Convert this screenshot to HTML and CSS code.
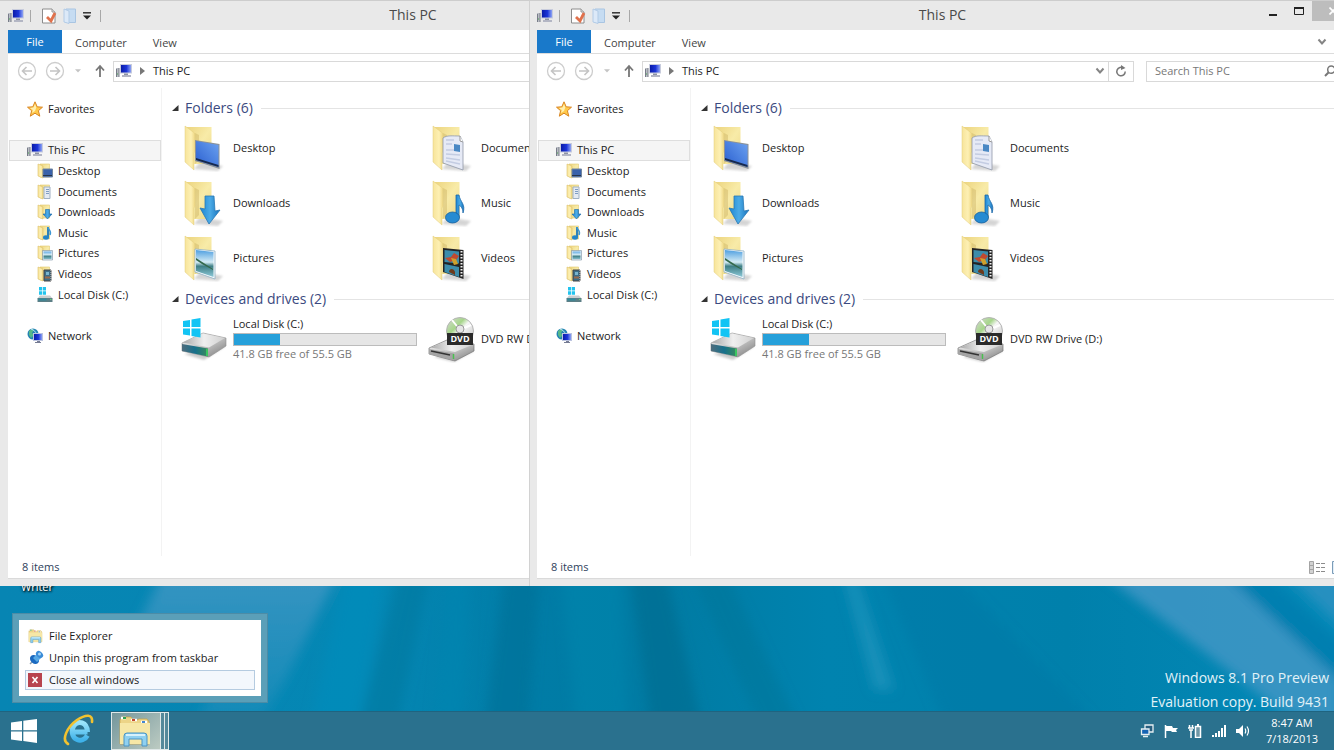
FILE: index.html
```
<!DOCTYPE html>
<html lang="en">
<head>
<meta charset="utf-8">
<title>This PC</title>
<link rel="stylesheet" href="styles.css">
</head>
<body>
<svg class="sprite" width="0" height="0" aria-hidden="true">
  <defs>
    <linearGradient id="gFront" x1="0" x2="1"><stop offset="0" stop-color="#f7e49a"/><stop offset=".6" stop-color="#fdf0b4"/><stop offset="1" stop-color="#efd782"/></linearGradient>
    <linearGradient id="gBack" x1="0" x2="1" y2="1"><stop offset="0" stop-color="#ecd47e"/><stop offset=".5" stop-color="#f8eba8"/><stop offset="1" stop-color="#edd887"/></linearGradient>
    <linearGradient id="gBlue" x1="0" x2="1" y1="1" y2="0"><stop offset="0" stop-color="#2a5fd0"/><stop offset="1" stop-color="#6ca2f0"/></linearGradient>
    <linearGradient id="gArrow" x1="0" x2="1"><stop offset="0" stop-color="#1b86d2"/><stop offset=".5" stop-color="#4cabe6"/><stop offset="1" stop-color="#1672bd"/></linearGradient>
    <linearGradient id="gSky" x2="0" y2="1"><stop offset="0" stop-color="#4f9fe0"/><stop offset=".45" stop-color="#d5ecf5"/><stop offset=".6" stop-color="#3f7f86"/><stop offset="1" stop-color="#8cc8d8"/></linearGradient>
    <linearGradient id="gMetal" x1="0" x2="1" y2="1"><stop offset="0" stop-color="#f4f4f4"/><stop offset=".6" stop-color="#b9b9b9"/><stop offset="1" stop-color="#777"/></linearGradient>
    <linearGradient id="gTop" x1="0" x2="1"><stop offset="0" stop-color="#a8a8a8"/><stop offset=".5" stop-color="#efefef"/><stop offset="1" stop-color="#d0d0d0"/></linearGradient>
    <linearGradient id="gTeal" x1="0" x2="1"><stop offset="0" stop-color="#4f6c7c"/><stop offset=".5" stop-color="#17708c"/><stop offset="1" stop-color="#3a8a5c"/></linearGradient>
    <linearGradient id="gScreen" x1="0" x2="1"><stop offset="0" stop-color="#0a1ba8"/><stop offset=".55" stop-color="#1c35d8"/><stop offset="1" stop-color="#8ea4f4"/></linearGradient>
    <linearGradient id="gIe" x2="0" y2="1"><stop offset="0" stop-color="#9be4fb"/><stop offset="1" stop-color="#3fb2ea"/></linearGradient>
    <linearGradient id="gDisc" x1="0" x2="1" y2="1"><stop offset="0" stop-color="#d9d9d9"/><stop offset=".35" stop-color="#a6d68a"/><stop offset=".5" stop-color="#f6f6f6"/><stop offset="1" stop-color="#bdbdbd"/></linearGradient>
    <filter id="soft"><feGaussianBlur stdDeviation="1.2"/></filter>
  </defs>

  <symbol id="pc" viewBox="0 0 16 16">
    <path d="M0 5h3v9H0z" fill="#b9bcc4"/><path d="M.5 6v8M3 5v9" stroke="#777c88"/><path d="M1 11h1" stroke="#4aa84e"/>
    <path d="M4 1h12v9.500H4z" fill="#c8ccdc"/><path d="M5 2h10v7.500H5z" fill="url(#gScreen)"/>
    <path d="M8 10.500h4v2H8z" fill="#8d92a4"/><path d="M6 12h9v2H6z" fill="#b3b6c4"/>
  </symbol>
  <symbol id="props" viewBox="0 0 16 16">
    <path d="M1.500 1h9.500l3 3v11h-12.500z" fill="#fff" stroke="#8c8c8c"/><path d="M11 1v3h3" fill="#ddd" stroke="#999"/>
    <path d="M6 9l4 4 4-8" fill="none" stroke="#e0714c" stroke-width="2.800"/>
  </symbol>
  <symbol id="newfolder" viewBox="0 0 14 16">
    <path d="M3 1h9.500v13.500H3z" fill="#c6dcf2" stroke="#a9c5e2"/><path d="M1 1l5 2v12.500l-5-1.500z" fill="#dce9f8" stroke="#b2cbe6"/>
  </symbol>
  <symbol id="star" viewBox="0 0 16 16">
    <path d="M8 .8l2.200 5 5.300.4-4.100 3.500 1.400 5.500L8 12.200l-4.700 3 1.300-5.500L.5 6.200l5.300-.4z" fill="#ffc94a" stroke="#d98624"/><path d="M8 3l1.300 3.500L8 10 5 12l.8-3L3 7l3.500-.4z" fill="#fff0b0"/>
  </symbol>
  <symbol id="network" viewBox="0 0 16 16">
    <circle cx="6" cy="6" r="5.500" fill="#2383b4"/><path d="M2 3c2-2 4-2 5-1L5 5l2 2-3 3-2-3z" fill="#56b88a"/><path d="M4 1c3 1 5 3 5 5" stroke="#bfe6f4" fill="none"/>
    <path d="M6 5h10v8H6z" fill="#bcc4e0"/><path d="M7 6h8v6H7z" fill="url(#gScreen)"/><path d="M10 13h3v1h1v1H8v-1h2z" fill="#767c94"/>
  </symbol>
  <symbol id="folderS" viewBox="0 0 16 16">
    <path d="M3 1h9.500v13H3z" fill="url(#gBack)" stroke="#e2c970" stroke-width=".6"/><path d="M1 1l5 2v12l-5-2z" fill="url(#gFront)" stroke="#dcc06a" stroke-width=".6"/>
  </symbol>
  <symbol id="desktopS" viewBox="0 0 16 16"><use href="#folderS"/><path d="M6 6h9.500v8H6z" fill="#3a62aa" stroke="#71859f"/><path d="M6 12.500h9" stroke="#26354a"/></symbol>
  <symbol id="documentsS" viewBox="0 0 16 16"><use href="#folderS"/><path d="M7 3h6v11.500H7z" fill="#e4eaf2" stroke="#9fb0c4"/><path d="M9 5.500h3M9 7.500h3M9 9.500h3" stroke="#7e9dc4"/></symbol>
  <symbol id="downloadsS" viewBox="0 0 16 16"><use href="#folderS"/><path d="M8.500 5.500h4V10H15l-4.500 5L6 10h2.500z" fill="url(#gArrow)" stroke="#1a6aa8" stroke-width=".6"/></symbol>
  <symbol id="musicS" viewBox="0 0 16 16"><use href="#folderS"/><path d="M11 2v10" stroke="#1b77bb" stroke-width="1.800"/><path d="M11 2c0 3 4 3 2 8" fill="none" stroke="#3d97d4" stroke-width="1.500"/><ellipse cx="9" cy="12.500" rx="3" ry="2.200" fill="#2385c8"/></symbol>
  <symbol id="picturesS" viewBox="0 0 16 16"><use href="#folderS"/><path d="M6 6h9v8.500H6z" fill="url(#gSky)" stroke="#e4eef4"/><path d="M5.500 5.500h10v9.500h-10z" fill="none" stroke="#7890a4" stroke-width=".6"/></symbol>
  <symbol id="videosS" viewBox="0 0 16 16"><use href="#folderS"/><path d="M7 4h7v11H7z" fill="#3c6e88" stroke="#444"/><path d="M9 6h3v3H9z" fill="#79b4ce"/><path d="M8 11.500h5" stroke="#9a6a4c" stroke-width="2"/><path d="M14 4v11" stroke="#ddd" stroke-dasharray="1 1"/></symbol>
  <symbol id="diskS" viewBox="0 0 16 16">
    <path d="M2 0l3-.1v3.600H2zM5.700 0L9-.1v3.600H5.700zM2 4.200h3v3.600H2zM5.700 4.200H9v3.600H5.700z" fill="#22c3ee"/>
    <path d="M3 8.500h10l2.500 3H.5z" fill="#c8ced0"/><path d="M.5 11h15v4H.5z" fill="#5d7f86"/><path d="M1.500 12.500h8" stroke="#2f8a9c" stroke-width="2"/><path d="M13 12.500h1.500" stroke="#62d377"/>
  </symbol>

  <symbol id="folderL" viewBox="0 0 44 48">
    <path d="M18 38l23 4-5 5-24-2z" fill="#b9b9b9" opacity=".6" filter="url(#soft)"/>
    <path d="M4 3h25.500v37H12z" fill="url(#gBack)"/>
    <path d="M13 9l4 2v25l-4 4z" fill="#b89a48" opacity=".3"/>
    <path d="M3 2l9.500 7 .5 18-1 2v17L3 38z" fill="url(#gFront)" stroke="#e3cd7c" stroke-width=".5"/>
  </symbol>
  <symbol id="desktopL" viewBox="0 0 44 48"><use href="#folderL"/><path d="M13 16l24.500 4v25L13 37z" fill="#8c9298"/><path d="M14 17l22.500 4v22L14 36z" fill="url(#gBlue)"/><path d="M14 34l22.500 7v2L14 36z" fill="#17294d"/></symbol>
  <symbol id="documentsL" viewBox="0 0 44 48"><use href="#folderL"/><path d="M13 14c4-3 9-2 17-2l3 6v28l-20-7z" fill="#e6eaf6" stroke="#8f98a8" stroke-width=".8"/><path d="M16 16h8M16 20h6M16 26h14M16 30l14 1M16 34l14 2M16 37l14 3" stroke="#c3cce2" stroke-width="1.300"/><path d="M24 20l6 1v7l-6-1z" fill="#4a88c4"/><path d="M30 12v5l3 1" fill="#fff" stroke="#999"/></symbol>
  <symbol id="downloadsL" viewBox="0 0 44 48"><use href="#folderL"/><path d="M23 17h9l1 15 5-1-11 14-9-16 5 1z" fill="url(#gArrow)" stroke="#2a78b4" stroke-width=".8"/></symbol>
  <symbol id="musicL" viewBox="0 0 44 48"><use href="#folderL"/><path d="M26 16h3c1 7 7 9 4 18 0-6-4-8-4-8v13h-3z" fill="url(#gArrow)" stroke="#1a68aa" stroke-width=".8"/><ellipse cx="22.500" cy="38.500" rx="7" ry="5.500" fill="#268bd2" stroke="#17609c" stroke-width=".8"/></symbol>
  <symbol id="picturesL" viewBox="0 0 44 48"><use href="#folderL"/><path d="M13 15l20 2v28l-20-7z" fill="#f6fafc" stroke="#8fb0c4" stroke-width=".8"/><path d="M14 16l17.500 2v25L14 37z" fill="url(#gSky)"/><path d="M14 26l6 4 11 6v-1L14 24z" fill="#34694c"/></symbol>
  <symbol id="videosL" viewBox="0 0 44 48"><use href="#folderL"/><path d="M13 14l20.500 2v29L13 38z" fill="#242424"/><path d="M14.500 16l14.500 1.500v12L14.500 28zM14.500 30l14.500 3v10l-14.500-5z" fill="#3c8cab"/><path d="M15 24l6-1 3-4 5 3-3 4-6 2z" fill="#c14a30"/><path d="M21 24l5 1 2 5-4 1z" fill="#d0a02c"/><path d="M19 38c0-4 5-4 6 0v3z" fill="#6d3a1c"/><path d="M31.500 17v27" stroke="#f4f4f4" stroke-width="2" stroke-dasharray="1.500 1.500"/></symbol>
  <symbol id="diskL" viewBox="0 0 48 44">
    <path d="M4 37l20 6 22-14-8 1z" fill="#999" opacity=".5" filter="url(#soft)"/>
    <path d="M2 26l21-10 23 5v8L29 40 2 34z" fill="url(#gMetal)" stroke="#8e8e8e" stroke-width=".6"/>
    <path d="M3 25.500l20-9 22 4.500-16 9.500z" fill="url(#gTop)"/><path d="M2 27l26 4.500v8L2 34z" fill="url(#gTeal)"/><path d="M27 32v7" stroke="#3ddb60" stroke-width="1.500"/>
    <path d="M3 4l7-1v7H3zM11.500 2.500L20.500 1v9h-9zM3 11.500h7v7l-7-1zM11.500 11.500h9v9l-9-1.500z" fill="#12c4f4"/>
  </symbol>
  <symbol id="dvdL" viewBox="0 0 48 48">
    <path d="M6 42l20 5 20-11-4-5z" fill="#999" opacity=".5" filter="url(#soft)"/>
    <circle cx="32" cy="16" r="13.500" fill="url(#gDisc)" stroke="#b5b5b5"/><path d="M32 15L24 5M32 15l11-5" stroke="#fff" stroke-width="2"/><circle cx="32" cy="14" r="4" fill="#e6e6e6" stroke="#999"/>
    <path d="M1 33l18-8 27 4v7L27 46 1 39z" fill="url(#gMetal)" stroke="#777" stroke-width=".7"/><path d="M3 32.500L19 26l25 4-17 7z" fill="url(#gTop)"/>
    <path d="M1 34l25 4.500v7L1 39z" fill="#a4a4a4"/><path d="M3 36l19 4" stroke="#333" stroke-width="1.300"/><path d="M25.500 39v5" stroke="#49c04f" stroke-width="1.500"/>
    <path d="M19 18h26v12H19z" fill="#2b2b2b"/><text x="32" y="27" class="dvd-text">DVD</text>
  </symbol>

  <symbol id="explorer" viewBox="0 0 36 32">
    <path d="M2 5l2-3h9l2 3h4l2-1h8l2 3v22H2z" fill="#ecd487" stroke="#c7a243" stroke-width=".7"/>
    <path d="M3 3h5M13 5h6M23 7h6" stroke="#fff" stroke-width="2.500"/><path d="M5 3h3" stroke="#32a252" stroke-width="2"/><path d="M14 5h3" stroke="#c5492d" stroke-width="2"/><path d="M24 7h3" stroke="#4587cf" stroke-width="2"/>
    <path d="M2 8h30v21H2z" fill="#f6e7a6"/>
    <path d="M6 31V21q0-3 3-3h17q3 0 3 3v10h-5v-7H11v7z" fill="#8fd0f0" stroke="#4a94c4"/><path d="M8 20h19" stroke="#d6f1fc" stroke-width="2"/>
  </symbol>
  <symbol id="pin" viewBox="0 0 16 16">
    <path d="M2 14l4-4" stroke="#8b9eae" stroke-width="1.500"/><ellipse cx="6.500" cy="9.500" rx="5" ry="4" transform="rotate(45 6.500 9.500)" fill="#1c6ac0"/><path d="M5 8l4-4 4 4-4 4z" fill="#57a9e6"/><ellipse cx="11.500" cy="4.500" rx="4" ry="3" transform="rotate(45 11.500 4.500)" fill="#3a8cd8"/><circle cx="11.500" cy="4" r="1.500" fill="#a5d5f6"/>
  </symbol>
  <symbol id="closeRed" viewBox="0 0 14 14"><path d="M0 0h14v14H0z" fill="#b8434e"/><path d="M4.500 4l5 6M9.500 4l-5 6" stroke="#fff" stroke-width="1.600"/></symbol>
  <symbol id="ie" viewBox="0 0 32 32">
    <path d="M24.500 18H10.500M24.300 21.500C22 26 17.500 27 14 25.500 8.500 23 8 15.500 11 11.500 15 6.500 24 7.500 24.500 18" fill="none" stroke="url(#gIe)" stroke-width="5"/>
    <path d="M5 30C-2 26 4 13 14 6c9-6 16-6 15 2" fill="none" stroke="#f2c230" stroke-width="2.600" stroke-linecap="round"/>
  </symbol>
  <symbol id="start" viewBox="0 0 26 24"><path d="M0 3.500l11-1.600v9.400H0zM12.300 1.700L26 0v11.300H12.300zM0 12.600h11V22L0 20.500zM12.300 12.600H26V24l-13.700-1.900z" fill="#fff"/></symbol>

  <symbol id="back" viewBox="0 0 20 20"><circle cx="10" cy="10" r="8.500" fill="none" stroke="#cdcdcd" stroke-width="1.300"/><path d="M15 10H6M9.500 6L5.500 10l4 4" fill="none" stroke="#c4c4c4" stroke-width="1.600"/></symbol>
  <symbol id="forward" viewBox="0 0 20 20"><circle cx="10" cy="10" r="8.500" fill="none" stroke="#cdcdcd" stroke-width="1.300"/><path d="M5 10h9M10.500 6l4 4-4 4" fill="none" stroke="#c4c4c4" stroke-width="1.600"/></symbol>
  <symbol id="up" viewBox="0 0 10 14"><path d="M5 13V3M1 6.500L5 2l4 4.500" fill="none" stroke="#777" stroke-width="1.800"/></symbol>
  <symbol id="caret" viewBox="0 0 8 5"><path d="M0 0h8L4 4.500z"/></symbol>
  <symbol id="crumb" viewBox="0 0 5 8"><path d="M0 0l5 4-5 4z" fill="#777"/></symbol>
  <symbol id="customize" viewBox="0 0 8 8"><path d="M0 .8h8" stroke="#333" stroke-width="1.500"/><path d="M0 3.500h8L4 7.500z" fill="#222"/></symbol>
  <symbol id="chev" viewBox="0 0 10 8"><path d="M1.500 1.500L5 5.500l3.500-4" fill="none" stroke="currentColor" stroke-width="2"/></symbol>
  <symbol id="refresh" viewBox="0 0 12 12"><path d="M8.500 3.200A4.200 4.200 0 1 0 10.200 6.500" fill="none" stroke="#777" stroke-width="1.500"/><path d="M6 0l4.500 3L6 5z" fill="#777"/></symbol>
  <symbol id="lens" viewBox="0 0 12 12"><circle cx="7.300" cy="4.700" r="3.600" fill="none" stroke="#777" stroke-width="1.500"/><path d="M4.700 7.300L1 11" stroke="#777" stroke-width="2"/></symbol>
  <symbol id="expand" viewBox="0 0 7 6"><path d="M6.500 0v6H0z" fill="#333"/></symbol>
  <symbol id="min" viewBox="0 0 10 12"><path d="M1 10h8" stroke="#222" stroke-width="2"/></symbol>
  <symbol id="max" viewBox="0 0 10 8"><path d="M.5.500h9v7h-9z" fill="none" stroke="#222"/><path d="M0 1h10" stroke="#222" stroke-width="2"/></symbol>
  <symbol id="close" viewBox="0 0 8 8"><path d="M.5.500l7 7M7.500.500l-7 7" stroke="#fff" stroke-width="1.600"/></symbol>
  <symbol id="details" viewBox="0 0 16 13"><path d="M.5.500h4v12h-4zM.5 4.500h4M.5 8.500h4" fill="#d2d2d2" stroke="#a4a4a4"/><path d="M7 2.500h9M7 6.500h9M7 10.500h9" stroke="#8c8c8c" stroke-dasharray="4 1"/></symbol>
  <symbol id="tiles" viewBox="0 0 16 13"><path d="M.5.500h15v12H.5z" fill="#e2eef8" stroke="#7b9cb8"/></symbol>

  <symbol id="tSync" viewBox="0 0 14 14"><path d="M5 1h8v7H5z" fill="#285f80" stroke="#e6eff2" stroke-width="1.300"/><path d="M1.500 5h7.500v5.500H1.500z" fill="#1664b4" stroke="#e6eff2" stroke-width="1.300"/><path d="M3 12.500h5" stroke="#e6eff2" stroke-width="1.500"/></symbol>
  <symbol id="tFlag" viewBox="0 0 14 14"><path d="M1.500 1v13" stroke="#fff" stroke-width="1.500"/><path d="M2 2h6l1 2h5l-2 2 1 2H8L7 7H2z" fill="#fff"/></symbol>
  <symbol id="tPower" viewBox="0 0 14 14"><path d="M7.500 2.500h5v11h-5z" fill="#6f97a6" stroke="#fff" stroke-width="1.500"/><path d="M9 1h2" stroke="#fff" stroke-width="2"/><path d="M0 4h6M1.500 1v3M4.500 1v3M1 6h4M3 6v8" stroke="#fff" stroke-width="1.500"/></symbol>
  <symbol id="tSignal" viewBox="0 0 14 14"><path d="M1 13v-2M4 13V9M7 13V7M10 13V4M13 13V1" stroke="#fff" stroke-width="2"/></symbol>
  <symbol id="tSound" viewBox="0 0 14 14"><path d="M0 5h3l4-4v12L3 9H0z" fill="#fff"/><path d="M9 4.500q1.500 2.500 0 5M11 2.500q3 4.500 0 9" fill="none" stroke="#fff" stroke-width="1.200"/></symbol>
</svg>

<main class="desktop">
  <svg class="wallpaper" viewBox="0 0 1334 170" preserveAspectRatio="none" aria-hidden="true">
    <defs>
      <linearGradient id="base" x1="0" x2="1"><stop offset="0" stop-color="#0785b3"/><stop offset=".28" stop-color="#0487b4"/><stop offset=".4" stop-color="#007ca6"/><stop offset=".5" stop-color="#007ba3"/><stop offset=".62" stop-color="#0083af"/><stop offset=".8" stop-color="#0080ab"/><stop offset="1" stop-color="#0489b8"/></linearGradient>
      <linearGradient id="fade" x2="0" y2="1"><stop offset="0" stop-color="#4398c5"/><stop offset="1" stop-color="#4398c5" stop-opacity=".1"/></linearGradient>
      <filter id="blur" x="-20%" y="-20%" width="140%" height="140%"><feGaussianBlur stdDeviation="6"/></filter>
    </defs>
    <path d="M0 0h1334v170H0z" fill="url(#base)"/>
    <g filter="url(#blur)">
      <path d="M170-20h175L285 100l-40 70h-60l40-90L130 60z" fill="url(#fade)" opacity=".85"/>
      <path d="M345-10h40l-30 180h-50z" fill="#048cba" opacity=".7"/>
      <path d="M400-10h30l-40 190h-40z" fill="#00759b" opacity=".5"/>
      <path d="M450-10h20l-10 190h-30z" fill="#0086b0" opacity=".6"/>
      <path d="M505-10h35l-15 190h-45z" fill="#006f95" opacity=".55"/>
      <path d="M560-10h60l10 190h-50z" fill="#0086ad" opacity=".6"/>
      <path d="M630-10h35l45 190h-55z" fill="#00698c" opacity=".55"/>
      <path d="M690-10h35l90 190h-40z" fill="#007397" opacity=".45"/>
      <path d="M842-10h12l40 120h-20z" fill="#2a9ac2" opacity=".6"/>
      <path d="M880-10h70l180 190H960z" fill="#0078a3" opacity=".45"/>
      <path d="M1085-20h125l130 115v55l-60-20z" fill="#3995c3" opacity=".95"/>
      <path d="M1270-20h75v70z" fill="#2890c0"/>
      <path d="M1210-20h40l100 90v40z" fill="#047fb0"/>
    </g>
  </svg>

  <span class="desktop-label">Writer</span>
  <div class="watermark">Windows 8.1 Pro Preview<br>Evaluation copy. Build 9431</div>

  <section class="window window-left" aria-label="This PC">
    <header class="titlebar">
      <div class="quick">
        <svg class="i16"><use href="#pc"/></svg><i class="sep"></i>
        <button aria-label="Properties"><svg class="i16"><use href="#props"/></svg></button>
        <button aria-label="New folder"><svg class="i16"><use href="#newfolder"/></svg></button>
        <button aria-label="Customize"><svg class="i8"><use href="#customize"/></svg></button><i class="sep"></i>
      </div>
      <h1>This PC</h1>
      <div class="controls">
        <button aria-label="Minimize"><svg class="ctl-min"><use href="#min"/></svg></button><button aria-label="Maximize"><svg class="ctl-max"><use href="#max"/></svg></button><button class="close" aria-label="Close"><svg class="i8"><use href="#close"/></svg></button>
      </div>
    </header>
    <div class="client">
      <nav class="tabs"><button class="file">File</button><button>Computer</button><button>View</button><button class="ribbon" aria-label="Expand the ribbon"><svg class="chev"><use href="#chev"/></svg></button></nav>
      <div class="navrow">
        <button aria-label="Back"><svg class="i20"><use href="#back"/></svg></button>
        <button aria-label="Forward"><svg class="i20"><use href="#forward"/></svg></button>
        <button class="recent" aria-label="Recent locations"><svg class="caret"><use href="#caret"/></svg></button>
        <button class="upbtn" aria-label="Up"><svg class="uparrow"><use href="#up"/></svg></button>
        <div class="address"><svg class="i16"><use href="#pc"/></svg><svg class="crumb"><use href="#crumb"/></svg><span>This PC</span><button class="drop" aria-label="Previous locations"><svg class="chev"><use href="#chev"/></svg></button><button class="refresh" aria-label="Refresh"><svg class="i12"><use href="#refresh"/></svg></button></div>
        <label class="search"><input type="text" placeholder="Search This PC" aria-label="Search This PC"><svg class="i12"><use href="#lens"/></svg></label>
      </div>
      <div class="body">
        <aside class="tree">
          <div class="tree-list">
            <a href="#"><svg class="i16"><use href="#star"/></svg>Favorites</a>
            <i></i>
            <a href="#" class="selected"><svg class="i16"><use href="#pc"/></svg>This PC</a>
            <a href="#" class="child"><svg class="i16"><use href="#desktopS"/></svg>Desktop</a>
            <a href="#" class="child"><svg class="i16"><use href="#documentsS"/></svg>Documents</a>
            <a href="#" class="child"><svg class="i16"><use href="#downloadsS"/></svg>Downloads</a>
            <a href="#" class="child"><svg class="i16"><use href="#musicS"/></svg>Music</a>
            <a href="#" class="child"><svg class="i16"><use href="#picturesS"/></svg>Pictures</a>
            <a href="#" class="child"><svg class="i16"><use href="#videosS"/></svg>Videos</a>
            <a href="#" class="child"><svg class="i16"><use href="#diskS"/></svg>Local Disk (C:)</a>
            <i></i>
            <a href="#"><svg class="i16"><use href="#network"/></svg>Network</a>
          </div>
        </aside>
        <div class="content">
          <h2><svg class="expand"><use href="#expand"/></svg>Folders (6)</h2>
          <div class="grid">
            <a href="#"><svg class="i48"><use href="#desktopL"/></svg>Desktop</a>
            <a href="#"><svg class="i48"><use href="#documentsL"/></svg>Documents</a>
            <a href="#"><svg class="i48"><use href="#downloadsL"/></svg>Downloads</a>
            <a href="#"><svg class="i48"><use href="#musicL"/></svg>Music</a>
            <a href="#"><svg class="i48"><use href="#picturesL"/></svg>Pictures</a>
            <a href="#"><svg class="i48"><use href="#videosL"/></svg>Videos</a>
          </div>
          <h2><svg class="expand"><use href="#expand"/></svg>Devices and drives (2)</h2>
          <div class="grid">
            <a href="#"><svg class="i48"><use href="#diskL"/></svg><span class="drive">Local Disk (C:)<span class="usage"><span style="width:25%"></span></span><small>41.8 GB free of 55.5 GB</small></span></a>
            <a href="#"><svg class="i48"><use href="#dvdL"/></svg>DVD RW Drive (D:)</a>
          </div>
        </div>
      </div>
      <footer class="status"><span>8 items</span><button aria-label="Details view"><svg class="view"><use href="#details"/></svg></button><button aria-label="Tiles view"><svg class="view"><use href="#tiles"/></svg></button></footer>
    </div>
  </section>

  <section class="window window-right" aria-label="This PC">
    <header class="titlebar">
      <div class="quick">
        <svg class="i16"><use href="#pc"/></svg><i class="sep"></i>
        <button aria-label="Properties"><svg class="i16"><use href="#props"/></svg></button>
        <button aria-label="New folder"><svg class="i16"><use href="#newfolder"/></svg></button>
        <button aria-label="Customize"><svg class="i8"><use href="#customize"/></svg></button><i class="sep"></i>
      </div>
      <h1>This PC</h1>
      <div class="controls">
        <button aria-label="Minimize"><svg class="ctl-min"><use href="#min"/></svg></button><button aria-label="Maximize"><svg class="ctl-max"><use href="#max"/></svg></button><button class="close" aria-label="Close"><svg class="i8"><use href="#close"/></svg></button>
      </div>
    </header>
    <div class="client">
      <nav class="tabs"><button class="file">File</button><button>Computer</button><button>View</button><button class="ribbon" aria-label="Expand the ribbon"><svg class="chev"><use href="#chev"/></svg></button></nav>
      <div class="navrow">
        <button aria-label="Back"><svg class="i20"><use href="#back"/></svg></button>
        <button aria-label="Forward"><svg class="i20"><use href="#forward"/></svg></button>
        <button class="recent" aria-label="Recent locations"><svg class="caret"><use href="#caret"/></svg></button>
        <button class="upbtn" aria-label="Up"><svg class="uparrow"><use href="#up"/></svg></button>
        <div class="address"><svg class="i16"><use href="#pc"/></svg><svg class="crumb"><use href="#crumb"/></svg><span>This PC</span><button class="drop" aria-label="Previous locations"><svg class="chev"><use href="#chev"/></svg></button><button class="refresh" aria-label="Refresh"><svg class="i12"><use href="#refresh"/></svg></button></div>
        <label class="search"><input type="text" placeholder="Search This PC" aria-label="Search This PC"><svg class="i12"><use href="#lens"/></svg></label>
      </div>
      <div class="body">
        <aside class="tree">
          <div class="tree-list">
            <a href="#"><svg class="i16"><use href="#star"/></svg>Favorites</a>
            <i></i>
            <a href="#" class="selected"><svg class="i16"><use href="#pc"/></svg>This PC</a>
            <a href="#" class="child"><svg class="i16"><use href="#desktopS"/></svg>Desktop</a>
            <a href="#" class="child"><svg class="i16"><use href="#documentsS"/></svg>Documents</a>
            <a href="#" class="child"><svg class="i16"><use href="#downloadsS"/></svg>Downloads</a>
            <a href="#" class="child"><svg class="i16"><use href="#musicS"/></svg>Music</a>
            <a href="#" class="child"><svg class="i16"><use href="#picturesS"/></svg>Pictures</a>
            <a href="#" class="child"><svg class="i16"><use href="#videosS"/></svg>Videos</a>
            <a href="#" class="child"><svg class="i16"><use href="#diskS"/></svg>Local Disk (C:)</a>
            <i></i>
            <a href="#"><svg class="i16"><use href="#network"/></svg>Network</a>
          </div>
        </aside>
        <div class="content">
          <h2><svg class="expand"><use href="#expand"/></svg>Folders (6)</h2>
          <div class="grid">
            <a href="#"><svg class="i48"><use href="#desktopL"/></svg>Desktop</a>
            <a href="#"><svg class="i48"><use href="#documentsL"/></svg>Documents</a>
            <a href="#"><svg class="i48"><use href="#downloadsL"/></svg>Downloads</a>
            <a href="#"><svg class="i48"><use href="#musicL"/></svg>Music</a>
            <a href="#"><svg class="i48"><use href="#picturesL"/></svg>Pictures</a>
            <a href="#"><svg class="i48"><use href="#videosL"/></svg>Videos</a>
          </div>
          <h2><svg class="expand"><use href="#expand"/></svg>Devices and drives (2)</h2>
          <div class="grid">
            <a href="#"><svg class="i48"><use href="#diskL"/></svg><span class="drive">Local Disk (C:)<span class="usage"><span style="width:25%"></span></span><small>41.8 GB free of 55.5 GB</small></span></a>
            <a href="#"><svg class="i48"><use href="#dvdL"/></svg>DVD RW Drive (D:)</a>
          </div>
        </div>
      </div>
      <footer class="status"><span>8 items</span><button aria-label="Details view"><svg class="view"><use href="#details"/></svg></button><button aria-label="Tiles view"><svg class="view"><use href="#tiles"/></svg></button></footer>
    </div>
  </section>

  <div class="jumplist" role="menu">
    <div class="jump-inner">
      <button role="menuitem"><svg class="i16"><use href="#explorer"/></svg>File Explorer</button>
      <button role="menuitem"><svg class="i16"><use href="#pin"/></svg>Unpin this program from taskbar</button>
      <button role="menuitem" class="hover"><svg class="i14"><use href="#closeRed"/></svg>Close all windows</button>
    </div>
  </div>

  <footer class="taskbar">
    <button class="start" aria-label="Start"><svg class="starticon"><use href="#start"/></svg></button>
    <button class="ie" aria-label="Internet Explorer"><svg class="i32"><use href="#ie"/></svg></button>
    <button class="running" aria-label="File Explorer"><span class="face"><svg class="exp"><use href="#explorer"/></svg></span><i></i><i></i></button>
    <div class="tray">
      <svg><use href="#tSync"/></svg><svg><use href="#tFlag"/></svg><svg><use href="#tPower"/></svg><svg><use href="#tSignal"/></svg><svg><use href="#tSound"/></svg>
    </div>
    <time class="clock">8:47 AM<br>7/18/2013</time>
  </footer>
</main>
</body>
</html>
```
FILE: styles.css
```
* { box-sizing: border-box; }
body { margin: 0; font: 11px/16px "Open Sans", "Noto Sans", sans-serif; color: #1c1c1c; }
button { margin: 0; padding: 0; border: 0; background: none; font: inherit; color: inherit; display: flex; align-items: center; }
a { color: inherit; text-decoration: none; }
svg { display: block; flex: none; }
.sprite { position: absolute; }
.i8 { width: 8px; height: 8px; }
.i12 { width: 12px; height: 12px; }
.i14 { width: 14px; height: 14px; }
.i16 { width: 16px; height: 16px; }
.i20 { width: 20px; height: 20px; }
.i32 { width: 32px; height: 32px; }
.i48 { width: 48px; height: 48px; }
.chev { width: 10px; height: 8px; color: #858585; }
.dvd-text { font: bold 9px "Open Sans", sans-serif; fill: #fff; text-anchor: middle; }

.desktop { position: relative; display: flex; flex-direction: column; justify-content: flex-end; height: 100vh; overflow: hidden; background: #0485b2; }
.wallpaper { position: absolute; left: 0; bottom: 0; width: 100%; height: 170px; }
.desktop-label { position: absolute; left: 21px; bottom: 155px; color: #fff; text-shadow: 1px 1px 2px #000, 0 0 3px #000; }
.watermark { position: absolute; right: 5px; bottom: 36px; font-size: 14px; line-height: 24px; text-align: right; color: #e2f2f8; }

.window { position: absolute; top: 0; bottom: 164px; width: 826px; display: flex; flex-direction: column; padding: 0 7px 7px; background: #e9e9e9; border-top: 1px solid #cdcdcd; }
.window-left { left: 0; }
.window-right { left: 529px; border-left: 1px solid #d2d2d2; }
.titlebar { position: relative; display: flex; justify-content: space-between; height: 29px; }
.titlebar h1 { position: absolute; left: 0; right: 0; top: 4px; margin: 0; font-size: 14px; line-height: 20px; font-weight: 400; text-align: center; color: #4a4a4a; pointer-events: none; }
.quick { display: flex; align-items: center; gap: 5px; }
.window-left .quick { padding-left: 1px; }
.quick .sep + button { margin-left: 4px; }
.sep { width: 1px; height: 12px; margin: 0 1px; background: #a8a8a8; }
.quick button:last-of-type { margin: 0 3px 0 0; }
.controls { display: flex; align-items: flex-start; }
.controls button { justify-content: center; width: 26px; height: 20px; }
.controls .close { width: 36px; padding-left: 6px; background: #bdbdbd; }
.ctl-min { width: 10px; height: 12px; }
.ctl-max { width: 10px; height: 8px; }

.client { flex: 1; display: flex; flex-direction: column; margin-left: 1px; background: #fff; border-bottom: 1px solid #dadada; min-height: 0; }
.window-right .client { margin-left: 0; }
.tabs { display: flex; height: 24px; border-bottom: 1px solid #dcdcdc; color: #444; }
.tabs button { justify-content: center; padding: 2px 13px 0; }
.tabs .file { width: 54px; padding: 0; background: #1979ca; color: #fff; }
.tabs .ribbon { margin-left: auto; padding: 0 21px; }
.navrow { display: flex; align-items: center; height: 34px; padding: 0 7px 0 9px; }
.navrow > button + button { margin-left: 8px; }
.navrow .recent { margin-left: 10px; }
.caret { width: 6px; height: 4px; fill: #c4c4c4; }
.navrow .upbtn { margin-left: 14px; }
.uparrow { width: 10px; height: 14px; }
.address { flex: 1; display: flex; align-items: center; height: 21px; margin-left: 8px; padding-left: 2px; border: 1px solid #d9d9d9; }
.crumb { width: 5px; height: 8px; margin: 0 8px; }
.address .drop { height: 19px; margin-left: auto; padding: 0 3px; }
.address .refresh { height: 19px; padding: 0 6px; border-left: 1px solid #d9d9d9; }
.search { display: flex; align-items: center; width: 195px; height: 21px; margin-left: 12px; padding: 0 4px 0 8px; border: 1px solid #d9d9d9; }
.search input { flex: 1; min-width: 0; padding: 0; border: 0; outline: 0; font: inherit; background: none; }
.search input::placeholder { color: #777; opacity: 1; }

.body { flex: 1; display: flex; min-height: 0; }
.tree { width: 154px; padding: 11px 0 0 1px; border-right: 1px solid #f3f3f3; }
.tree-list { display: grid; grid-auto-rows: 1fr; height: 247px; }
.tree a { display: flex; align-items: center; gap: 5px; padding-left: 18px; }
.tree a.child { padding-left: 28px; }
.tree a.selected { padding-left: 17px; background: #f5f5f5; border: 1px solid #dedede; }
.content { flex: 1; padding: 10px 0 0 10px; }
.content h2 { display: flex; align-items: center; margin: 0; font-size: 14px; line-height: 20px; font-weight: 400; color: #3b4a80; }
.content h2::after { content: ""; flex: 1; height: 1px; margin-left: 8px; background: #e4e4e4; }
.expand { width: 7px; height: 6px; margin-right: 6px; }
.grid { display: grid; grid-template-columns: repeat(2, 248px); grid-auto-rows: 55px; padding: 2px 0 4px; }
.grid a { display: flex; align-items: center; gap: 5px; padding-left: 8px; white-space: nowrap; }
.drive { display: flex; flex-direction: column; width: 184px; line-height: 14px; }
.usage { height: 13px; margin: 2px 0 1px; background: #e6e6e6; border: 1px solid #bcbcbc; }
.usage span { display: block; height: 100%; background: #26a0da; }
.drive small { font-size: 11px; color: #777; }
.status { display: flex; align-items: center; gap: 7px; height: 22px; padding: 0 0 0 14px; color: #2f3f5c; }
.status span { margin-right: auto; }
.view { width: 16px; height: 13px; }
.status button:last-child { width: 16px; overflow: hidden; }

.jumplist { position: absolute; left: 12px; bottom: 47px; width: 256px; padding: 6px; background: #5b9fb8; border: 1px solid #4c8ca6; }
.jump-inner { display: flex; flex-direction: column; gap: 2px; padding: 6px; background: #fff; }
.jump-inner button { gap: 5px; height: 20px; padding: 0 2px; border: 1px solid transparent; white-space: nowrap; }
.jump-inner .hover { gap: 7px; background: #f3f7fc; border-color: #b5cbe0; }

.taskbar { position: relative; display: flex; align-items: stretch; height: 39px; background: #2a718e; border-top: 1px solid #1f6480; color: #fff; }
.start { padding: 0 11px; }
.starticon { width: 26px; height: 24px; }
.ie { padding: 0 16px 3px 15px; }
.running { align-items: stretch; }
.face { display: flex; align-items: center; justify-content: center; width: 50px; border: 1px solid #dfe8e8; background: linear-gradient(135deg, #74969c, #bccbc2); }
.exp { width: 36px; height: 32px; }
.running i { width: 4px; border: solid #dfe8e8; border-width: 1px 1px 1px 0; background: #55899a; }
.tray { display: flex; align-items: center; gap: 10px; margin-left: auto; }
.tray svg { width: 14px; height: 14px; }
.clock { padding: 3px 16px 0; text-align: center; line-height: 16px; }
```
